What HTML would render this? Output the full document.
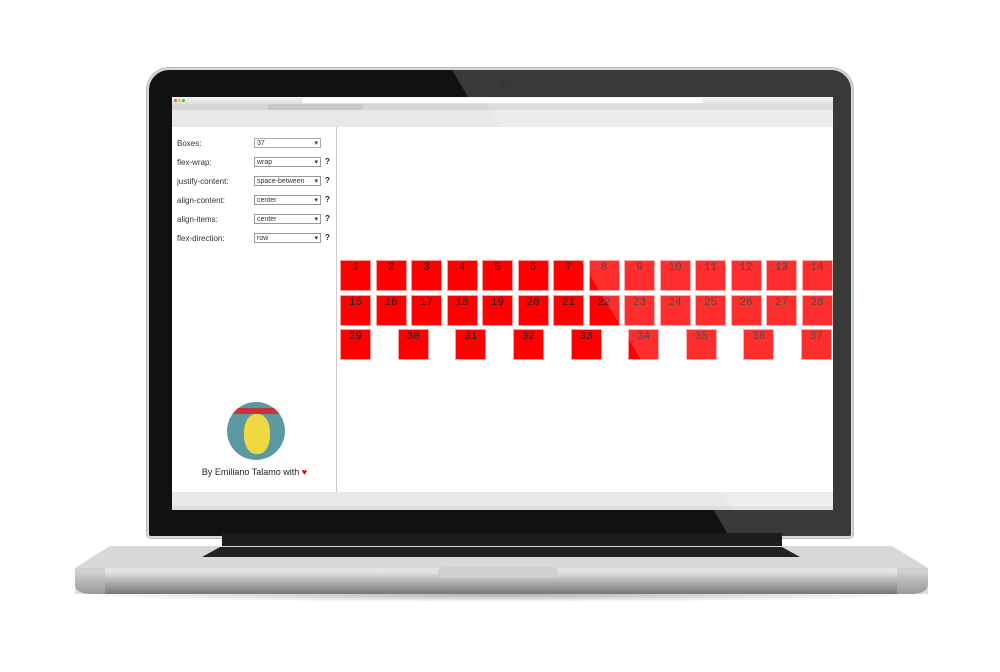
<!DOCTYPE html>
<html><head><meta charset="utf-8"><style>
*{margin:0;padding:0;box-sizing:border-box}
body{width:1000px;height:672px;background:#fff;position:relative;overflow:hidden;font-family:"Liberation Sans",sans-serif}
.abs{position:absolute}
#lid{left:147px;top:68px;width:706px;height:470px;background:#111;border-radius:22px 22px 4px 4px;border:2px solid #d8d8d8;box-shadow:0 0 0 1px #bbb;overflow:hidden}
#screen{left:172px;top:97px;width:661px;height:413px;background:#fff;overflow:hidden}
.lbl{position:absolute;left:5px;font-size:8px;color:#333}
.sel{position:absolute;left:82px;width:67px;height:10px;border:1px solid #999;background:#fff;font-size:7px;color:#333;padding-left:2px;line-height:9px}
.sel:after{content:"▾";position:absolute;right:2px;top:0;font-size:7px}
.q{position:absolute;left:153px;font-size:8px;font-weight:bold;color:#222}
.box{position:absolute;width:31px;height:31px;background:#ff0000;border:1px solid #ff9a9a;font-family:"Liberation Mono",monospace;font-size:11px;color:#222;text-align:center;line-height:14px}
</style></head><body>
<div class="abs" style="left:70px;top:588px;width:860px;height:14px;border-radius:50%;background:radial-gradient(ellipse,rgba(0,0,0,.3),rgba(0,0,0,0) 70%)"></div>
<div id="lid" class="abs"><svg class="abs" style="left:0;top:0" width="702" height="466"><polygon points="303,0 702,0 702,466 580,466" fill="#555" opacity=".6"/></svg></div>
<div class="abs" style="left:499px;top:80px;width:6px;height:6px;border-radius:50%;background:#334"></div>
<div id="screen" class="abs">
 <div class="abs" style="left:0;top:0;width:661px;height:7px;background:linear-gradient(#f4f4f4,#ddd)"></div>
 <div class="abs" style="left:2px;top:2px;width:3px;height:3px;border-radius:50%;background:#f55"></div>
 <div class="abs" style="left:6px;top:2px;width:3px;height:3px;border-radius:50%;background:#fb3"></div>
 <div class="abs" style="left:10px;top:2px;width:3px;height:3px;border-radius:50%;background:#3c4"></div>
 <div class="abs" style="left:130px;top:1px;width:400px;height:5px;background:#fff;border-radius:1px"></div>
 <div class="abs" style="left:0;top:7px;width:661px;height:6px;background:#d6d6d6"></div>
 <div class="abs" style="left:96px;top:7px;width:94px;height:6px;background:#c8c8c8"></div>
 <div class="abs" style="left:0;top:13px;width:661px;height:17px;background:#e8e8e8"></div>
 <div class="abs" style="left:0;top:30px;width:165px;height:365px;border-right:1px solid #ccc;background:#fff">
  <div class="lbl" style="top:12px">Boxes:</div><div class="sel" style="top:11px;border-color:#aaa">37</div>
  <div class="lbl" style="top:31px">flex-wrap:</div><div class="sel" style="top:30px">wrap</div><div class="q" style="top:30px">?</div>
  <div class="lbl" style="top:50px">justify-content:</div><div class="sel" style="top:49px">space-between</div><div class="q" style="top:49px">?</div>
  <div class="lbl" style="top:69px">align-content:</div><div class="sel" style="top:68px">center</div><div class="q" style="top:68px">?</div>
  <div class="lbl" style="top:88px">align-items:</div><div class="sel" style="top:87px">center</div><div class="q" style="top:87px">?</div>
  <div class="lbl" style="top:107px">flex-direction:</div><div class="sel" style="top:106px">row</div><div class="q" style="top:106px">?</div>
  <div class="abs" style="left:55px;top:275px;width:58px;height:58px;border-radius:50%;background:#5a9aa0;overflow:hidden">
   <div class="abs" style="left:0;top:6px;width:58px;height:6px;background:#c33"></div>
   <div class="abs" style="left:17px;top:12px;width:26px;height:40px;border-radius:45%;background:#f0d840"></div>
  </div>
  <div class="abs" style="left:0;top:340px;width:165px;text-align:center;font-size:9px;color:#222">By Emiliano Talamo with <span style="color:#e00">♥</span></div>
 </div>
 <div class="abs" style="left:0;top:395px;width:661px;height:18px;background:#e9e9e9;border-bottom:4px solid #ddd"></div>
 <div id="boxes"></div>
 <svg class="abs" style="left:0;top:0" width="661" height="413"><polygon points="310,0 661,0 661,413 560,413" fill="#fff" opacity=".18"/></svg>
</div>
<div class="abs" style="left:222px;top:533px;width:560px;height:13px;background:#1c1c1c"></div>
<svg class="abs" style="left:70px;top:544px" width="862" height="56">
 <defs><linearGradient id="g" x1="0" y1="0" x2="0" y2="1"><stop offset="0" stop-color="#e8e8e8"/><stop offset=".55" stop-color="#e2e2e2"/><stop offset=".7" stop-color="#bbb"/><stop offset="1" stop-color="#777"/></linearGradient></defs>
 <path d="M40,2 L822,2 L858,24 L858,40 Q858,50 840,50 L22,50 Q5,50 5,40 L5,24 Z" fill="url(#g)"/>
 <path d="M40,2 L822,2 L858,24 L5,24 Z" fill="#d8d8d8"/>
 <path d="M150,3 L712,3 L730,13 L132,13 Z" fill="#222"/>
 <rect x="368" y="23" width="120" height="11" rx="5" fill="#d0d0d0"/>
 <rect x="5" y="24" width="30" height="26" fill="#bbb" opacity=".5"/>
 <rect x="827" y="24" width="31" height="26" fill="#bbb" opacity=".5"/>
</svg>
<script>
var b=document.getElementById('boxes'),h='';
var xs=[],i;
for(i=0;i<14;i++)xs.push(168+i*35.5);
for(i=1;i<=37;i++){var x,y;
 if(i<=28){x=xs[(i-1)%14];y=i<=14?163:197.5}
 else{x=168+(i-29)*57.63;y=232}
 h+='<div class="box" style="left:'+x+'px;top:'+y+'px">'+i+'</div>';}
b.innerHTML=h;
</script>
</body></html>
